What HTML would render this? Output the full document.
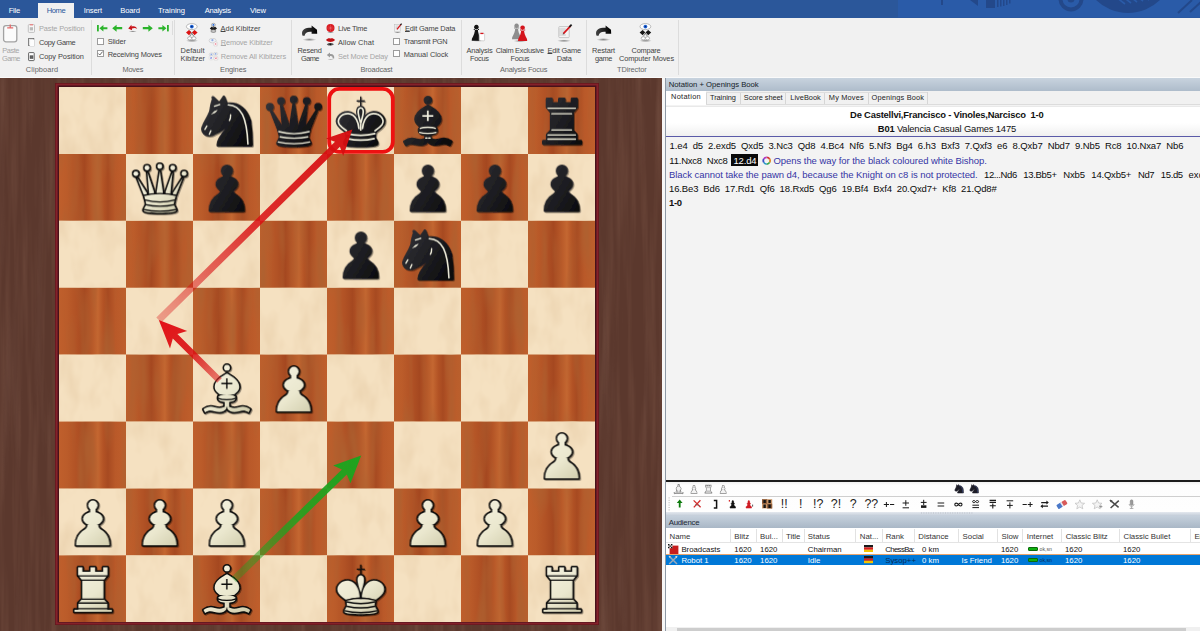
<!DOCTYPE html>
<html><head><meta charset="utf-8"><title>ChessBase</title>
<style>
*{box-sizing:border-box;margin:0;padding:0}
html,body{width:1200px;height:631px;overflow:hidden;background:#5f3d31;font-family:"Liberation Sans",sans-serif;}
body{position:relative}
#boardwrap{position:absolute;left:0;top:77.9px;width:662px;height:553.1px;overflow:hidden;background:#5e3b30;}
#boardwrap svg{position:absolute}
#boardwrap > *{margin-top:-77.9px}
span.t{position:absolute;white-space:nowrap;}
span.t u{text-decoration-thickness:0.5px;text-underline-offset:0.4px}
#frame{position:absolute;left:55.2px;top:83.2px;width:543.4px;height:542.2px;background:#7a1c24;box-shadow:inset 0 0 0 0.8px #65181e, inset 0 0 0 2.6px #84212a, inset 0 0 0 4px #47121a}



</style></head><body>
<svg width="0" height="0" style="position:absolute">
<defs>
<linearGradient id="gw" gradientUnits="userSpaceOnUse" x1="120" y1="100" x2="480" y2="540"><stop offset="0" stop-color="#f6f3e2"/><stop offset="0.55" stop-color="#ebe8cf"/><stop offset="1" stop-color="#cfcbaa"/></linearGradient>
<linearGradient id="gb" gradientUnits="userSpaceOnUse" x1="80" y1="150" x2="540" y2="420"><stop offset="0" stop-color="#313136"/><stop offset="0.6" stop-color="#1b1b1f"/><stop offset="1" stop-color="#0a0a0c"/></linearGradient>

<!-- PAWN -->
<g id="pS"><circle cx="303" cy="151" r="42"/><rect x="279" y="180" width="48" height="45"/><ellipse cx="303" cy="272" rx="89" ry="61"/><path d="M153,509 C153,440 185,395 225,372 C245,360 255,345 255,325 L351,325 C351,345 361,360 381,372 C421,395 452,440 452,509 Z"/></g>

<!-- ROOK -->
<g id="rS"><path d="M171,108 H209 V148 H281 V108 H323 V148 H395 V108 H434 V180 L398,225 V392 L432,428 V488 H472 V507 H138 V488 H173 V428 L208,392 V225 L171,180 Z"/></g>
<g id="rDw"><path d="M171,185 H434 M205,223 H401 M205,393 H401 M173,428 H432 M165,479 H440"/></g>
<g id="rDb"><path d="M178,190 H425 M213,240 H390 M213,385 H390 M178,430 H425 M178,467 H425"/></g>

<!-- KNIGHT -->
<g id="nS"><path d="M178,94 L236,150 L276,90 L300,152 C400,140 470,190 508,300 C522,400 524,470 524,522 L223,522 C222,470 265,420 305,375 L312,335 C280,375 230,400 190,418 C160,440 120,432 100,412 C82,395 82,372 95,345 C115,300 150,250 158,215 C162,180 170,140 182,105 Z"/></g>
<g id="nDb"><path d="M316,160 C430,165 482,270 492,512" stroke-width="14"/><path d="M192,172 L240,157"/><path d="M337,250 C338,272 333,290 326,300"/><path d="M124,350 L106,380 M160,392 L146,424"/><path d="M168,242 Q186,214 218,208 Q206,234 168,242 Z" fill="#f3f1de" stroke-width="3"/></g>

<!-- QUEEN -->
<g id="qS"><circle cx="88" cy="178" r="22"/><circle cx="188" cy="125" r="22"/><circle cx="302" cy="112" r="22"/><circle cx="418" cy="125" r="22"/><circle cx="520" cy="176" r="22"/>
<path d="M99,214 L186,350 L190,400 L172,400 Z"/><path d="M191,165 L250,340 L250,400 L208,400 L206,346 Z"/><path d="M302,152 L330,340 L330,400 L274,400 L274,340 Z"/><path d="M415,165 L398,346 L396,400 L354,400 L354,340 Z"/><path d="M507,214 L434,400 L416,400 L420,350 Z"/>
<path d="M165,374 C240,354 368,354 443,374 C438,410 428,435 428,452 C432,475 452,490 449,508 C440,535 168,535 158,508 C155,490 176,475 180,452 C180,435 170,410 165,374 Z"/></g>
<g id="qDw"><path d="M160,372 C240,350 368,350 448,372 M172,414 C250,434 358,434 436,414 M181,456 C250,474 358,474 427,456 M160,498 C240,520 368,520 447,498"/></g>
<g id="qDb"><path d="M168,400 C250,422 358,422 440,400 M180,447 C250,464 358,464 428,447 M163,493 C240,514 368,514 445,493"/></g>

<!-- KING -->
<g id="kS">
<path d="M292,378 C292,330 268,236 190,228 C118,224 68,292 104,342 C122,368 150,385 172,402 C212,386 260,380 292,378 Z"/>
<path d="M312,378 C312,330 336,236 414,228 C486,224 536,292 500,342 C482,368 454,385 432,402 C392,386 344,380 312,378 Z"/>
<path d="M302,180 C330,180 334,215 329,240 C324,275 310,310 302,338 C294,310 280,275 275,240 C270,215 274,180 302,180 Z"/>
<path d="M172,402 C250,380 354,380 432,402 C430,420 424,440 427,455 C432,475 454,490 449,508 C440,535 164,535 155,508 C150,490 172,475 177,455 C180,440 174,420 172,402 Z"/>
</g>
<g id="kX"><path d="M302,84 V172 M266,125 H338"/></g>
<g id="kDw"><path d="M170,403 C250,381 354,381 434,403 M302,338 V388 M176,418 C250,436 354,436 428,418 M180,458 C250,474 354,474 424,458 M158,498 C240,520 364,520 446,498"/></g>
<g id="kDb">
<path d="M286,372 C284,330 262,244 190,238 C126,236 82,294 112,338 C128,360 150,376 174,392" />
<path d="M318,372 C320,330 342,244 414,238 C478,236 522,294 492,338 C476,360 454,376 430,392"/>
<path d="M302,186 C324,186 328,215 323,240 C318,272 308,300 302,326 C296,300 286,272 281,240 C276,215 280,186 302,186 Z"/>
<path d="M176,418 C250,436 354,436 428,418 M182,462 C250,478 354,478 422,462 M302,330 V385"/>
</g>

<!-- BISHOP -->
<g id="bS"><circle cx="304" cy="118" r="26"/>
<path d="M304,170 C335,188 414,226 414,288 C414,326 384,340 368,356 L240,356 C224,340 194,326 194,288 C194,226 273,188 304,170 Z"/>
<ellipse cx="303" cy="382" rx="78" ry="25"/>
<path d="M225,394 C225,436 381,436 381,394 Z"/>
<rect x="284" y="420" width="40" height="50"/>
<path d="M296,460 C270,480 235,484 195,472 C160,461 125,466 94,490 L108,518 C135,500 160,498 192,508 C240,522 285,514 300,482 Z"/>
<path d="M310,460 C336,480 371,484 411,472 C446,461 481,466 512,490 L498,518 C471,500 446,498 414,508 C366,522 321,514 306,482 Z"/>
</g>
<g id="bX"><path d="M303,212 V306 M254,260 H352"/></g>
<g id="bDw"><path d="M228,392 C260,408 346,408 378,392"/></g>
<g id="bDb"><path d="M236,372 C260,358 346,358 370,372 M230,408 C262,420 344,420 376,408"/><path d="M285,458 H296 M312,458 H323" stroke-width="14"/></g>
</defs>
</svg>

<div style="position:absolute;left:0px;top:0px;width:1200px;height:17.5px;background:#2b579a"></div>
<svg style="position:absolute;left:898px;top:0" width="302" height="17.5" viewBox="898 0 302 17.5"><rect x="898" y="0" width="302" height="17.5" fill="#2a5ba8"/>
<g fill="#23488a"><rect x="941" y="0" width="2" height="5"/><path d="M970,0 L978,0 L978,6 Z"/><rect x="986" y="0" width="9" height="8"/><path d="M997,0h1.5v7h-1.5zM1000,0h1.5v6.5h-1.5zM1003,0h1.5v6h-1.5zM1006,0h1.5v5h-1.5zM1009,0h1.5v3.5h-1.5z"/>
<circle cx="1128" cy="-32.9" r="45.9"/></g>
<circle cx="1071" cy="-1" r="10.5" fill="none" stroke="#23488a" stroke-width="4"/><circle cx="1071" cy="-1" r="3.5" fill="#23488a"/>
<g stroke="#2a5ba8" stroke-width="1.6"><path d="M1116,-3 l9,7 M1122,-4 l9,7 M1128,-5 l9,7 M1134,-6 l9,7 M1140,-7 l9,7"/></g>
<g stroke="#23488a" stroke-width="2"><path d="M1178,13 L1192,0 M1190,12 L1202,1"/></g></svg>
<div style="position:absolute;left:37.5px;top:2.5px;width:36.3px;height:15.5px;background:#f1f1f1"></div>
<span class="t" id="t1" style="font-size:7.6px;color:#fff;top:5.84px;line-height:9.12px;left:8.70px;letter-spacing:-0.237px;">File</span>
<span class="t" id="t2" style="font-size:7.6px;color:#2b579a;top:5.84px;line-height:9.12px;left:46.70px;letter-spacing:-0.416px;">Home</span>
<span class="t" id="t3" style="font-size:7.6px;color:#fff;top:5.84px;line-height:9.12px;left:83.70px;letter-spacing:-0.117px;">Insert</span>
<span class="t" id="t4" style="font-size:7.6px;color:#fff;top:5.84px;line-height:9.12px;left:120.30px;letter-spacing:-0.173px;">Board</span>
<span class="t" id="t5" style="font-size:7.6px;color:#fff;top:5.84px;line-height:9.12px;left:158.00px;letter-spacing:-0.020px;">Training</span>
<span class="t" id="t6" style="font-size:7.6px;color:#fff;top:5.84px;line-height:9.12px;left:204.70px;letter-spacing:-0.273px;">Analysis</span>
<span class="t" id="t7" style="font-size:7.6px;color:#fff;top:5.84px;line-height:9.12px;left:250.00px;letter-spacing:-0.132px;">View</span>
<div style="position:absolute;left:0px;top:17.5px;width:1200px;height:59.5px;background:#f1f1f1"></div>
<div style="position:absolute;left:0px;top:76.6px;width:1200px;height:1.4px;background:#fafafa"></div>
<div style="position:absolute;left:90.5px;top:20px;width:1px;height:55px;background:#dcdcdc"></div>
<div style="position:absolute;left:174.3px;top:20px;width:1px;height:55px;background:#dcdcdc"></div>
<div style="position:absolute;left:291.2px;top:20px;width:1px;height:55px;background:#dcdcdc"></div>
<div style="position:absolute;left:461.2px;top:20px;width:1px;height:55px;background:#dcdcdc"></div>
<div style="position:absolute;left:585.5px;top:20px;width:1px;height:55px;background:#dcdcdc"></div>
<div style="position:absolute;left:678.4px;top:20px;width:1px;height:55px;background:#dcdcdc"></div>
<div style="position:absolute;left:172px;top:21.3px;width:1px;height:13.400000000000002px;background:#dcdcdc"></div>
<span class="t" id="t8" style="font-size:7.4px;color:#a6a6a6;top:46.96px;line-height:8.88px;left:2.15px;letter-spacing:-0.401px;">Paste</span>
<span class="t" id="t9" style="font-size:7.4px;color:#a6a6a6;top:55.46px;line-height:8.88px;left:2.10px;letter-spacing:-0.635px;">Game</span>
<span class="t" id="t10" style="font-size:7.4px;color:#a6a6a6;top:24.76px;line-height:8.88px;left:39.00px;letter-spacing:-0.118px;">Paste Position</span>
<span class="t" id="t11" style="font-size:7.4px;color:#444;top:38.96px;line-height:8.88px;left:39.00px;letter-spacing:-0.338px;">Copy Game</span>
<span class="t" id="t12" style="font-size:7.4px;color:#444;top:53.26px;line-height:8.88px;left:39.00px;letter-spacing:-0.062px;">Copy Position</span>
<span class="t" id="t13" style="font-size:7.4px;color:#666;top:66.46px;line-height:8.88px;left:25.75px;letter-spacing:0.095px;">Clipboard</span>
<span class="t" id="t14" style="font-size:7.4px;color:#444;top:38.26px;line-height:8.88px;left:107.70px;letter-spacing:-0.134px;">Slider</span>
<span class="t" id="t15" style="font-size:7.4px;color:#444;top:50.66px;line-height:8.88px;left:107.70px;letter-spacing:-0.152px;">Receiving Moves</span>
<span class="t" id="t16" style="font-size:7.4px;color:#666;top:66.46px;line-height:8.88px;left:122.50px;letter-spacing:-0.196px;">Moves</span>
<span class="t" id="t17" style="font-size:7.4px;color:#444;top:46.96px;line-height:8.88px;left:180.60px;letter-spacing:0.083px;">Default</span>
<span class="t" id="t18" style="font-size:7.4px;color:#444;top:55.46px;line-height:8.88px;left:180.55px;letter-spacing:-0.020px;">Kibitzer</span>
<span class="t" id="t19" style="font-size:7.4px;color:#444;top:24.76px;line-height:8.88px;left:220.60px;letter-spacing:0.012px;"><u>A</u>dd Kibitzer</span>
<span class="t" id="t20" style="font-size:7.4px;color:#a6a6a6;top:38.96px;line-height:8.88px;left:220.80px;letter-spacing:-0.169px;"><u>R</u>emove Kibitzer</span>
<span class="t" id="t21" style="font-size:7.4px;color:#a6a6a6;top:53.26px;line-height:8.88px;left:220.80px;letter-spacing:-0.129px;">Remove All Kibitzers</span>
<span class="t" id="t22" style="font-size:7.4px;color:#666;top:66.46px;line-height:8.88px;left:220.05px;letter-spacing:-0.060px;">Engines</span>
<span class="t" id="t23" style="font-size:7.4px;color:#444;top:46.96px;line-height:8.88px;left:297.50px;letter-spacing:-0.247px;">Resend</span>
<span class="t" id="t24" style="font-size:7.4px;color:#444;top:55.46px;line-height:8.88px;left:301.00px;letter-spacing:-0.585px;">Game</span>
<span class="t" id="t25" style="font-size:7.4px;color:#444;top:24.76px;line-height:8.88px;left:338.00px;letter-spacing:-0.293px;">Live Time</span>
<span class="t" id="t26" style="font-size:7.4px;color:#444;top:38.96px;line-height:8.88px;left:338.00px;letter-spacing:0.067px;">Allow Chat</span>
<span class="t" id="t27" style="font-size:7.4px;color:#a6a6a6;top:53.26px;line-height:8.88px;left:338.00px;letter-spacing:-0.169px;">Set Move Delay</span>
<span class="t" id="t28" style="font-size:7.4px;color:#444;top:24.76px;line-height:8.88px;left:405.00px;letter-spacing:-0.164px;"><u>E</u>dit Game Data</span>
<span class="t" id="t29" style="font-size:7.4px;color:#444;top:38.26px;line-height:8.88px;left:403.70px;letter-spacing:-0.229px;">Transmit PGN</span>
<span class="t" id="t30" style="font-size:7.4px;color:#444;top:50.66px;line-height:8.88px;left:403.70px;letter-spacing:-0.015px;">Manual Clock</span>
<span class="t" id="t31" style="font-size:7.4px;color:#666;top:66.46px;line-height:8.88px;left:360.50px;letter-spacing:-0.142px;">Broadcast</span>
<span class="t" id="t32" style="font-size:7.4px;color:#444;top:46.96px;line-height:8.88px;left:466.50px;letter-spacing:-0.191px;">Analysis</span>
<span class="t" id="t33" style="font-size:7.4px;color:#444;top:55.46px;line-height:8.88px;left:470.00px;letter-spacing:-0.308px;">Focus</span>
<span class="t" id="t34" style="font-size:7.4px;color:#444;top:46.96px;line-height:8.88px;left:495.80px;letter-spacing:-0.278px;">Claim Exclusive</span>
<span class="t" id="t35" style="font-size:7.4px;color:#444;top:55.46px;line-height:8.88px;left:510.50px;letter-spacing:-0.308px;">Focus</span>
<span class="t" id="t36" style="font-size:7.4px;color:#444;top:46.96px;line-height:8.88px;left:547.55px;letter-spacing:-0.182px;"><u>E</u>dit Game</span>
<span class="t" id="t37" style="font-size:7.4px;color:#444;top:55.46px;line-height:8.88px;left:556.80px;letter-spacing:-0.206px;">Data</span>
<span class="t" id="t38" style="font-size:7.4px;color:#666;top:66.46px;line-height:8.88px;left:500.00px;letter-spacing:-0.179px;">Analysis Focus</span>
<span class="t" id="t39" style="font-size:7.4px;color:#444;top:46.96px;line-height:8.88px;left:592.00px;letter-spacing:-0.118px;">Restart</span>
<span class="t" id="t40" style="font-size:7.4px;color:#444;top:55.46px;line-height:8.88px;left:595.00px;letter-spacing:-0.375px;">game</span>
<span class="t" id="t41" style="font-size:7.4px;color:#444;top:46.96px;line-height:8.88px;left:631.50px;letter-spacing:-0.201px;">Compare</span>
<span class="t" id="t42" style="font-size:7.4px;color:#444;top:55.46px;line-height:8.88px;left:619.00px;letter-spacing:-0.092px;">Computer Moves</span>
<span class="t" id="t43" style="font-size:7.4px;color:#666;top:66.46px;line-height:8.88px;left:616.95px;letter-spacing:-0.077px;">TDirector</span>
<div style="position:absolute;left:97.3px;top:38px;width:6.8px;height:6.8px;background:#fff;border:0.7px solid #9c9c9c"></div>
<div style="position:absolute;left:97.3px;top:50.3px;width:6.8px;height:6.8px;background:#fff;border:0.7px solid #9c9c9c"></div>
<div style="position:absolute;left:393.2px;top:38px;width:6.8px;height:6.8px;background:#fff;border:0.7px solid #9c9c9c"></div>
<div style="position:absolute;left:393.2px;top:50.3px;width:6.8px;height:6.8px;background:#fff;border:0.7px solid #9c9c9c"></div>
<svg style="position:absolute;left:97.3px;top:50.3px" width="6.8" height="6.8" viewBox="0 0 6.8 6.8"><path d="M1.3,3.5 L2.8,5 L5.6,1.6" fill="none" stroke="#555" stroke-width="0.9"/></svg>
<svg style="position:absolute;left:0;top:0" width="700" height="77" viewBox="0 0 700 77">
<defs>
<radialGradient id="shd"><stop offset="0" stop-color="#000" stop-opacity="0.45"/><stop offset="1" stop-color="#000" stop-opacity="0"/></radialGradient>
<linearGradient id="gpn" x1="0" y1="0" x2="1" y2="0"><stop offset="0" stop-color="#444"/><stop offset="1" stop-color="#000"/></linearGradient>
<path id="curv" d="M1.2,9.6 C-0.6,5.4 2.2,1.6 7.4,1.6 L10.2,1.6 L10.2,-0.6 L15.6,3.6 L15.8,7.6 L10.2,7.6 L10.2,5.6 C6.6,5.2 3.6,6 3.2,9.6 Z"/>
<g id="eyeic"><ellipse cx="0" cy="0" rx="5.4" ry="3" fill="#fff" stroke="#8f8f8f" stroke-width="0.6"/><circle cx="0" cy="0" r="1.9" fill="#1b62d8"/><circle cx="0" cy="0" r="0.8" fill="#0a2a70"/></g>
<path id="pawnic" d="M0,-8 a2.3,2.3 0 1 1 -0.01,0 M-1.5,-3.8 C-1.2,-1 -2.6,2.6 -4.4,5.6 L-4.6,7.6 L4.6,7.6 L4.4,5.6 C2.6,2.6 1.2,-1 1.5,-3.8 Z M-2.6,-4 H2.6 V-3 H-2.6Z"/>
</defs>
<!-- Paste Game -->
<rect x="3.6" y="25.6" width="13.2" height="16.2" rx="2.4" fill="#fbfbfb" stroke="#a2a2a2" stroke-width="1.3"/>
<path d="M7.2,27.2 H13.2 V28.5 H7.2 Z M9.6,24.6 H10.9 V27.4 H9.6 Z" fill="#e46a6a"/>
<!-- Paste Position -->
<rect x="28.3" y="24.6" width="6.2" height="7.8" rx="0.8" fill="#f6f6f6" stroke="#b4b4b4" stroke-width="0.8"/>
<path d="M29.8,24 H33 V25.4 H29.8Z" fill="#e58a8a"/><rect x="29.8" y="27.2" width="3.2" height="3.2" fill="#b9b9b9"/>
<!-- Copy Game -->
<rect x="28.6" y="38.4" width="5.2" height="7.2" fill="#fff" stroke="#666" stroke-width="0.8"/><rect x="29.8" y="39.6" width="4.8" height="7" fill="#fdfdfd" stroke="#c8c8c8" stroke-width="0.5"/>
<!-- Copy Position -->
<rect x="28.6" y="52.6" width="5.6" height="8" rx="0.6" fill="#fff" stroke="#555" stroke-width="0.9"/><rect x="29.8" y="55.4" width="3.4" height="3.4" fill="#333"/><path d="M30.9,55.4v3.4M32.1,55.4v3.4" stroke="#ddd" stroke-width="0.4"/>
<!-- move arrows -->
<g fill="#2bb42b" stroke="none">
<rect x="97" y="25" width="1.8" height="6.4"/><path d="M99.4,28.2 L103.4,24.9 L103.4,27.2 L107.4,27.2 L107.4,29.2 L103.4,29.2 L103.4,31.5 Z"/>
<path d="M112.2,28.2 L116.6,24.7 L116.6,27.1 L122.2,27.1 L122.2,29.3 L116.6,29.3 L116.6,31.7 Z"/>
<path d="M152.8,28.2 L148.4,24.7 L148.4,27.1 L142.8,27.1 L142.8,29.3 L148.4,29.3 L148.4,31.7 Z"/>
<rect x="167" y="25" width="1.8" height="6.4"/><path d="M166.4,28.2 L162.4,24.9 L162.4,27.2 L158.4,27.2 L158.4,29.2 L162.4,29.2 L162.4,31.5 Z"/>
</g>
<ellipse cx="132.8" cy="31.4" rx="4" ry="1" fill="url(#shd)"/>
<path d="M128.2,28.6 L131.4,24.8 L131.6,26.4 C134.4,25.6 136.6,26.6 137.2,29 C135.8,27.8 134,27.8 131.9,28.6 L132.1,30.2 Z" fill="#c8141a"/>
<!-- Default Kibitzer -->
<ellipse cx="192" cy="40.8" rx="6.4" ry="1.3" fill="url(#shd)"/>
<use href="#eyeic" x="191.8" y="26.6"/>
<path d="M189.6,30.6 L194,36.4 M194,30.6 L189.6,36.4" stroke="#555" stroke-width="0.7"/>
<path d="M186,32.6 L189,30 L191.5,32.6 L189,35.2 Z M192.1,32.6 L194.6,30 L197.6,32.6 L194.6,35.2 Z" fill="#dc1212"/>
<ellipse cx="189.7" cy="38.3" rx="2.1" ry="1.6" fill="#fff" stroke="#8a8a8a" stroke-width="0.6"/><ellipse cx="193.9" cy="38.3" rx="2.1" ry="1.6" fill="#fff" stroke="#8a8a8a" stroke-width="0.6"/>
<!-- Add Kibitzer -->
<ellipse cx="213.4" cy="32" rx="3.8" ry="0.9" fill="url(#shd)"/>
<ellipse cx="213.4" cy="24.8" rx="2" ry="1.5" fill="#dfe8f6" stroke="#777" stroke-width="0.5"/><circle cx="213.4" cy="24.8" r="0.9" fill="#1b62d8"/>
<path d="M213.4,26.2 V31" stroke="#333" stroke-width="0.8"/>
<path d="M209.8,28.4 L211.8,26.6 L213.4,28 L215,26.6 L217,28.4 L214.8,30.2 L213.4,29.2 L212,30.2 Z" fill="#1a1a1a"/>
<ellipse cx="213.4" cy="31" rx="2.6" ry="1.1" fill="#e8e8e8" stroke="#555" stroke-width="0.6"/>
<!-- Remove Kibitzer -->
<g opacity="0.8"><ellipse cx="212.6" cy="40.6" rx="3.6" ry="2.3" fill="#eef2f8" stroke="#b5b5b5" stroke-width="0.6"/><circle cx="212.4" cy="40.2" r="1.1" fill="#7a9ae0"/><rect x="213.6" y="42" width="4" height="4" rx="0.7" fill="#fff" stroke="#c4c4c4" stroke-width="0.5"/><path d="M214.7,43.1 l1.8,1.8 m0,-1.8 l-1.8,1.8" stroke="#e8506a" stroke-width="0.8"/></g>
<g opacity="0.8"><ellipse cx="211.4" cy="54.4" rx="2.2" ry="1.5" fill="#eef2f8" stroke="#bbb" stroke-width="0.5"/><ellipse cx="215.6" cy="53.8" rx="2.2" ry="1.5" fill="#eef2f8" stroke="#bbb" stroke-width="0.5"/><circle cx="211.4" cy="54.4" r="0.9" fill="#7a9ae0"/><circle cx="215.6" cy="53.8" r="0.9" fill="#7a9ae0"/><rect x="209.2" y="56" width="3.8" height="3.8" rx="0.6" fill="#fff" stroke="#c4c4c4" stroke-width="0.5"/><path d="M210.2,57 l1.8,1.8 m0,-1.8 l-1.8,1.8" stroke="#6a7ae0" stroke-width="0.8"/><rect x="214" y="56.4" width="3.8" height="3.8" rx="0.6" fill="#fff" stroke="#c4c4c4" stroke-width="0.5"/><path d="M215,57.4 l1.8,1.8 m0,-1.8 l-1.8,1.8" stroke="#e8506a" stroke-width="0.8"/></g>
<!-- Resend Game -->
<ellipse cx="309.4" cy="39.6" rx="7" ry="1.6" fill="url(#shd)"/>
<use href="#curv" x="301.4" y="26.2" fill="url(#gpn)"/>
<!-- Live time -->
<ellipse cx="330.6" cy="32.4" rx="3.6" ry="0.8" fill="url(#shd)"/>
<circle cx="330.5" cy="28" r="4" fill="#d8161c"/><path d="M330.5,24.6 V31.4 M327.1,28 H333.9 M328.1,25.6 L332.9,30.4 M332.9,25.6 L328.1,30.4" stroke="#f08a8a" stroke-width="0.35"/>
<!-- Allow chat -->
<path d="M326,40 C327.6,38 329.2,37.8 330.4,38.6 C331.6,37.8 333.4,38 335,40 C333,42.6 328,42.6 326,40 Z" fill="#cc1418"/><path d="M326.6,40 H334.4" stroke="#7a0a0c" stroke-width="0.4"/>
<path d="M326.8,44.4 C328.6,42.6 332,42.6 334,44.2 C332,46 328.6,46 326.8,44.4 Z" fill="#555"/><circle cx="330.4" cy="44.3" r="0.9" fill="#111"/>
<!-- Set move delay -->
<path d="M326.8,55 L330,52.6 L330,54 C333,53.6 334.6,55.4 334.2,58.4 L332.6,58.4 C332.8,56.6 332,55.8 330,56 L330,57.4 Z" fill="#9a9a9a"/>
<ellipse cx="330.6" cy="59.4" rx="3.4" ry="0.7" fill="url(#shd)" opacity="0.6"/>
<!-- Edit game data small -->
<ellipse cx="397.6" cy="32.4" rx="3.6" ry="0.8" fill="url(#shd)"/>
<rect x="394.6" y="24.4" width="5.6" height="6.8" fill="#f4f4f4" stroke="#b8b8b8" stroke-width="0.5"/><path d="M395.6,26 h3 M395.6,27.4 h3 M395.6,28.8 h2.4" stroke="#999" stroke-width="0.4"/><path d="M397,29.4 L401,24.4" stroke="#d8161c" stroke-width="1.3"/><path d="M400.4,25.2 L401.6,23.6" stroke="#222" stroke-width="1.3"/>
<!-- Analysis Focus -->
<ellipse cx="477.4" cy="40.6" rx="6" ry="1.2" fill="url(#shd)"/>
<use href="#pawnic" x="476.4" y="33" fill="#141414" transform="translate(476.4,33) scale(1.02) translate(-476.4,-33)"/>
<rect x="479.2" y="33.4" width="5.4" height="7.4" rx="0.8" fill="#fff" stroke="#bdbdbd" stroke-width="0.6"/><rect x="480.4" y="32.8" width="3" height="1.3" fill="#d8161c"/>
<!-- Claim Exclusive Focus -->
<ellipse cx="520" cy="41" rx="7" ry="1.2" fill="url(#shd)"/>
<use href="#pawnic" x="516.6" y="31.6" fill="#8e8e8e"/>
<use href="#pawnic" x="522.6" y="33.4" fill="#d4141c"/>
<!-- Edit Game Data big -->
<ellipse cx="564" cy="40.8" rx="7" ry="1.4" fill="url(#shd)"/>
<rect x="558.8" y="26.6" width="10.4" height="11" rx="0.8" fill="#f4f4f4" stroke="#b4b4b4" stroke-width="0.7"/>
<path d="M560.4,29 h5.4 M560.4,31 h5 M560.4,33 h4 M560.4,35 h5.4" stroke="#9a9a9a" stroke-width="0.5"/><path d="M559.6,29h0.6M559.6,31h0.6M559.6,33h0.6M559.6,35h0.6" stroke="#777" stroke-width="0.6"/>
<path d="M563.4,33.6 L570.6,25.8" stroke="#d8161c" stroke-width="1.7"/><path d="M569.4,27 L571.6,24.6" stroke="#1a1a1a" stroke-width="1.8"/><path d="M562.6,34.6 L563.2,33 L564.2,34 Z" fill="#444"/>
<!-- Restart game -->
<ellipse cx="603.4" cy="39.6" rx="7" ry="1.6" fill="url(#shd)"/>
<use href="#curv" x="595.4" y="26.2" fill="url(#gpn)"/>
<!-- Compare computer moves -->
<ellipse cx="645.6" cy="40.8" rx="6.4" ry="1.3" fill="url(#shd)"/>
<use href="#eyeic" x="645.4" y="26.6"/>
<path d="M643.2,30.6 L647.6,36.4 M647.6,30.6 L643.2,36.4" stroke="#555" stroke-width="0.7"/>
<path d="M639.6,32.6 L642.6,30 L645.1,32.6 L642.6,35.2 Z M645.7,32.6 L648.2,30 L651.2,32.6 L648.2,35.2 Z" fill="#161616"/>
<ellipse cx="643.3" cy="38.3" rx="2.1" ry="1.6" fill="#fff" stroke="#8a8a8a" stroke-width="0.6"/><ellipse cx="647.5" cy="38.3" rx="2.1" ry="1.6" fill="#fff" stroke="#8a8a8a" stroke-width="0.6"/>
</svg>

<div id="boardwrap">
<svg width="662" height="554" style="position:absolute;left:0;top:0;margin:0"><defs>
<filter id="gbg" x="0" y="0" width="100%" height="100%"><feTurbulence type="fractalNoise" baseFrequency="0.14 0.006" numOctaves="3" seed="7"/><feColorMatrix type="matrix" values="0 0 0 0 0.25  0 0 0 0 0.12  0 0 0 0 0.08  0.7 0 0 0 -0.3"/></filter>
<filter id="gbg2" x="0" y="0" width="100%" height="100%"><feTurbulence type="fractalNoise" baseFrequency="0.09 0.005" numOctaves="2" seed="11"/><feColorMatrix type="matrix" values="0 0 0 0 0.50  0 0 0 0 0.32  0 0 0 0 0.26  0.32 0 0 0 -0.19"/></filter>
</defs><rect width="662" height="554" fill="#5b382d"/><rect width="662" height="554" filter="url(#gbg)"/><rect width="662" height="554" filter="url(#gbg2)"/></svg>
<div id="frame"></div>
<svg id="wood" width="536" height="535.20" style="position:absolute;left:59px;top:86.8px">
<defs>
<linearGradient id="dk" x1="0" y1="0" x2="1" y2="0"><stop offset="0" stop-color="#bf5f2c"/><stop offset="0.12" stop-color="#bb5c2a"/><stop offset="0.26" stop-color="#b15225"/><stop offset="0.38" stop-color="#a54820"/><stop offset="0.48" stop-color="#b55627"/><stop offset="0.58" stop-color="#c46731"/><stop offset="0.66" stop-color="#b35325"/><stop offset="0.73" stop-color="#a74a21"/><stop offset="0.84" stop-color="#b95929"/><stop offset="1" stop-color="#bf5f2c"/></linearGradient>
<filter id="gd" x="0" y="0" width="100%" height="100%"><feTurbulence type="fractalNoise" baseFrequency="0.09 0.012" numOctaves="2" seed="4"/><feColorMatrix type="matrix" values="0 0 0 0 0.42  0 0 0 0 0.12  0 0 0 0 0.03  2.0 0 0 0 -0.8"/></filter>
<filter id="gl" x="0" y="0" width="100%" height="100%"><feTurbulence type="fractalNoise" baseFrequency="0.05 0.025" numOctaves="3" seed="2"/><feColorMatrix type="matrix" values="0 0 0 0 0.84  0 0 0 0 0.66  0 0 0 0 0.44  2.0 0 0 0 -0.84"/></filter>
<clipPath id="lc"><path d="M0.00,0.00h67v66.90h-67zM134.00,0.00h67v66.90h-67zM268.00,0.00h67v66.90h-67zM402.00,0.00h67v66.90h-67zM67.00,66.90h67v66.90h-67zM201.00,66.90h67v66.90h-67zM335.00,66.90h67v66.90h-67zM469.00,66.90h67v66.90h-67zM0.00,133.80h67v66.90h-67zM134.00,133.80h67v66.90h-67zM268.00,133.80h67v66.90h-67zM402.00,133.80h67v66.90h-67zM67.00,200.70h67v66.90h-67zM201.00,200.70h67v66.90h-67zM335.00,200.70h67v66.90h-67zM469.00,200.70h67v66.90h-67zM0.00,267.60h67v66.90h-67zM134.00,267.60h67v66.90h-67zM268.00,267.60h67v66.90h-67zM402.00,267.60h67v66.90h-67zM67.00,334.50h67v66.90h-67zM201.00,334.50h67v66.90h-67zM335.00,334.50h67v66.90h-67zM469.00,334.50h67v66.90h-67zM0.00,401.40h67v66.90h-67zM134.00,401.40h67v66.90h-67zM268.00,401.40h67v66.90h-67zM402.00,401.40h67v66.90h-67zM67.00,468.30h67v66.90h-67zM201.00,468.30h67v66.90h-67zM335.00,468.30h67v66.90h-67zM469.00,468.30h67v66.90h-67z"/></clipPath>
</defs>
<rect width="536" height="535.20" fill="#bc5e2a"/>
<rect x="67" y="0.00" width="67" height="66.9" fill="url(#dk)"/><rect x="201" y="0.00" width="67" height="66.9" fill="url(#dk)"/><rect x="335" y="0.00" width="67" height="66.9" fill="url(#dk)"/><rect x="469" y="0.00" width="67" height="66.9" fill="url(#dk)"/><rect x="0" y="66.90" width="67" height="66.9" fill="url(#dk)"/><rect x="134" y="66.90" width="67" height="66.9" fill="url(#dk)"/><rect x="268" y="66.90" width="67" height="66.9" fill="url(#dk)"/><rect x="402" y="66.90" width="67" height="66.9" fill="url(#dk)"/><rect x="67" y="133.80" width="67" height="66.9" fill="url(#dk)"/><rect x="201" y="133.80" width="67" height="66.9" fill="url(#dk)"/><rect x="335" y="133.80" width="67" height="66.9" fill="url(#dk)"/><rect x="469" y="133.80" width="67" height="66.9" fill="url(#dk)"/><rect x="0" y="200.70" width="67" height="66.9" fill="url(#dk)"/><rect x="134" y="200.70" width="67" height="66.9" fill="url(#dk)"/><rect x="268" y="200.70" width="67" height="66.9" fill="url(#dk)"/><rect x="402" y="200.70" width="67" height="66.9" fill="url(#dk)"/><rect x="67" y="267.60" width="67" height="66.9" fill="url(#dk)"/><rect x="201" y="267.60" width="67" height="66.9" fill="url(#dk)"/><rect x="335" y="267.60" width="67" height="66.9" fill="url(#dk)"/><rect x="469" y="267.60" width="67" height="66.9" fill="url(#dk)"/><rect x="0" y="334.50" width="67" height="66.9" fill="url(#dk)"/><rect x="134" y="334.50" width="67" height="66.9" fill="url(#dk)"/><rect x="268" y="334.50" width="67" height="66.9" fill="url(#dk)"/><rect x="402" y="334.50" width="67" height="66.9" fill="url(#dk)"/><rect x="67" y="401.40" width="67" height="66.9" fill="url(#dk)"/><rect x="201" y="401.40" width="67" height="66.9" fill="url(#dk)"/><rect x="335" y="401.40" width="67" height="66.9" fill="url(#dk)"/><rect x="469" y="401.40" width="67" height="66.9" fill="url(#dk)"/><rect x="0" y="468.30" width="67" height="66.9" fill="url(#dk)"/><rect x="134" y="468.30" width="67" height="66.9" fill="url(#dk)"/><rect x="268" y="468.30" width="67" height="66.9" fill="url(#dk)"/><rect x="402" y="468.30" width="67" height="66.9" fill="url(#dk)"/>
<rect width="536" height="535.20" filter="url(#gd)"/>
<g clip-path="url(#lc)"><rect width="536" height="535.20" fill="#f5e1c1"/><rect width="536" height="535.20" filter="url(#gl)"/></g>
</svg>

<svg id="board" viewBox="0 0 4800 4800" preserveAspectRatio="none" style="position:absolute;left:59px;top:86.8px;width:536px;height:535.2px">
<defs><filter id="psh" x="-2%" y="-2%" width="104%" height="104%"><feGaussianBlur in="SourceAlpha" stdDeviation="5"/><feOffset dx="7" dy="6"/><feComponentTransfer><feFuncA type="linear" slope="0.4"/></feComponentTransfer><feMerge><feMergeNode/><feMergeNode in="SourceGraphic"/></feMerge></filter></defs>
<g filter="url(#psh)"><g transform="translate(1200,0)"><use href="#nS" fill="url(#gb)" stroke="url(#gb)" stroke-width="26" stroke-linejoin="round"/><use href="#nDb" fill="none" stroke="#f3f1de" stroke-width="12" stroke-linecap="round"/></g><g transform="translate(1800,0)"><use href="#qS" fill="url(#gb)" stroke="url(#gb)" stroke-width="26" stroke-linejoin="round"/><use href="#qDb" fill="none" stroke="#f3f1de" stroke-width="12" stroke-linecap="round"/></g><g transform="translate(2400,0)"><use href="#kS" fill="url(#gb)" stroke="url(#gb)" stroke-width="26" stroke-linejoin="round"/><use href="#kDb" fill="none" stroke="#f3f1de" stroke-width="15" stroke-linecap="round"/><use href="#kX" fill="none" stroke="#1a1a1f" stroke-width="12"/></g><g transform="translate(3000,0)"><use href="#bS" fill="url(#gb)" stroke="url(#gb)" stroke-width="26" stroke-linejoin="round"/><use href="#bDb" fill="none" stroke="#f3f1de" stroke-width="12" stroke-linecap="round"/><use href="#bX" fill="none" stroke="#f2f0e0" stroke-width="16"/></g><g transform="translate(4200,0)"><use href="#rS" fill="url(#gb)" stroke="url(#gb)" stroke-width="26" stroke-linejoin="round"/><use href="#rDb" fill="none" stroke="#f3f1de" stroke-width="12" stroke-linecap="round"/></g><g transform="translate(600,600)"><use href="#qS" fill="#0a0a0a" stroke="#0a0a0a" stroke-width="28" stroke-linejoin="round"/><use href="#qS" fill="url(#gw)"/><use href="#qDw" fill="none" stroke="#0a0a0a" stroke-width="12.5" stroke-linecap="round"/></g><g transform="translate(1200,600)"><use href="#pS" fill="url(#gb)" stroke="url(#gb)" stroke-width="26" stroke-linejoin="round"/></g><g transform="translate(3000,600)"><use href="#pS" fill="url(#gb)" stroke="url(#gb)" stroke-width="26" stroke-linejoin="round"/></g><g transform="translate(3600,600)"><use href="#pS" fill="url(#gb)" stroke="url(#gb)" stroke-width="26" stroke-linejoin="round"/></g><g transform="translate(4200,600)"><use href="#pS" fill="url(#gb)" stroke="url(#gb)" stroke-width="26" stroke-linejoin="round"/></g><g transform="translate(2400,1200)"><use href="#pS" fill="url(#gb)" stroke="url(#gb)" stroke-width="26" stroke-linejoin="round"/></g><g transform="translate(3000,1200)"><use href="#nS" fill="url(#gb)" stroke="url(#gb)" stroke-width="26" stroke-linejoin="round"/><use href="#nDb" fill="none" stroke="#f3f1de" stroke-width="12" stroke-linecap="round"/></g><g transform="translate(1200,2400)"><use href="#bS" fill="#0a0a0a" stroke="#0a0a0a" stroke-width="28" stroke-linejoin="round"/><use href="#bS" fill="url(#gw)"/><use href="#bDw" fill="none" stroke="#0a0a0a" stroke-width="12.5" stroke-linecap="round"/><use href="#bX" fill="none" stroke="#0a0a0a" stroke-width="12.5"/></g><g transform="translate(1800,2400)"><use href="#pS" fill="#0a0a0a" stroke="#0a0a0a" stroke-width="28" stroke-linejoin="round"/><use href="#pS" fill="url(#gw)"/></g><g transform="translate(4200,3000)"><use href="#pS" fill="#0a0a0a" stroke="#0a0a0a" stroke-width="28" stroke-linejoin="round"/><use href="#pS" fill="url(#gw)"/></g><g transform="translate(0,3600)"><use href="#pS" fill="#0a0a0a" stroke="#0a0a0a" stroke-width="28" stroke-linejoin="round"/><use href="#pS" fill="url(#gw)"/></g><g transform="translate(600,3600)"><use href="#pS" fill="#0a0a0a" stroke="#0a0a0a" stroke-width="28" stroke-linejoin="round"/><use href="#pS" fill="url(#gw)"/></g><g transform="translate(1200,3600)"><use href="#pS" fill="#0a0a0a" stroke="#0a0a0a" stroke-width="28" stroke-linejoin="round"/><use href="#pS" fill="url(#gw)"/></g><g transform="translate(3000,3600)"><use href="#pS" fill="#0a0a0a" stroke="#0a0a0a" stroke-width="28" stroke-linejoin="round"/><use href="#pS" fill="url(#gw)"/></g><g transform="translate(3600,3600)"><use href="#pS" fill="#0a0a0a" stroke="#0a0a0a" stroke-width="28" stroke-linejoin="round"/><use href="#pS" fill="url(#gw)"/></g><g transform="translate(0,4200)"><use href="#rS" fill="#0a0a0a" stroke="#0a0a0a" stroke-width="28" stroke-linejoin="round"/><use href="#rS" fill="url(#gw)"/><use href="#rDw" fill="none" stroke="#0a0a0a" stroke-width="12.5" stroke-linecap="round"/></g><g transform="translate(1200,4200)"><use href="#bS" fill="#0a0a0a" stroke="#0a0a0a" stroke-width="28" stroke-linejoin="round"/><use href="#bS" fill="url(#gw)"/><use href="#bDw" fill="none" stroke="#0a0a0a" stroke-width="12.5" stroke-linecap="round"/><use href="#bX" fill="none" stroke="#0a0a0a" stroke-width="12.5"/></g><g transform="translate(2400,4200)"><use href="#kS" fill="#0a0a0a" stroke="#0a0a0a" stroke-width="28" stroke-linejoin="round"/><use href="#kS" fill="url(#gw)"/><use href="#kDw" fill="none" stroke="#0a0a0a" stroke-width="12.5" stroke-linecap="round"/><use href="#kX" fill="none" stroke="#0a0a0a" stroke-width="12.5"/></g><g transform="translate(4200,4200)"><use href="#rS" fill="#0a0a0a" stroke="#0a0a0a" stroke-width="28" stroke-linejoin="round"/><use href="#rS" fill="url(#gw)"/><use href="#rDw" fill="none" stroke="#0a0a0a" stroke-width="12.5" stroke-linecap="round"/></g></g>
</svg>
<svg id="arrows" viewBox="0 0 1200 631" style="position:absolute;left:0;top:0;width:1200px;height:631px">
<defs>
<linearGradient id="ar1" gradientUnits="userSpaceOnUse" x1="219.5" y1="380.5" x2="158.8" y2="320"><stop offset="0" stop-color="#d90f12" stop-opacity="0.5"/><stop offset="0.5" stop-color="#d90f12" stop-opacity="0.9"/><stop offset="1" stop-color="#e31217" stop-opacity="1"/></linearGradient>
<linearGradient id="ar2" gradientUnits="userSpaceOnUse" x1="158.8" y1="320" x2="353.3" y2="129.2"><stop offset="0" stop-color="#d90f12" stop-opacity="0.32"/><stop offset="0.5" stop-color="#d90f12" stop-opacity="0.85"/><stop offset="1" stop-color="#d60d10" stop-opacity="0.97"/></linearGradient>
<linearGradient id="ar3" gradientUnits="userSpaceOnUse" x1="233.7" y1="579.7" x2="361.2" y2="456.2"><stop offset="0" stop-color="#1fa31f" stop-opacity="0.3"/><stop offset="0.5" stop-color="#1fa31f" stop-opacity="0.88"/><stop offset="1" stop-color="#1fa31f" stop-opacity="1"/></linearGradient>
</defs>
<rect x="329.2" y="88.9" width="63.6" height="63" rx="10" ry="10" fill="none" stroke="#ee1111" stroke-width="3.8"/>
<polygon points="217.2,382.8 172.8,338.6 170.0,348.4 158.8,320.0 187.2,331.1 177.4,333.9 221.8,378.2" fill="url(#ar1)"/><polygon points="156.3,317.5 335.0,141.8 326.0,138.4 352.4,129.6 343.2,155.9 339.9,146.8 161.3,322.5" fill="url(#ar2)"/><polygon points="231.3,577.2 341.9,469.5 333.2,465.5 361.2,455.6 350.5,483.3 346.8,474.5 236.1,582.2" fill="url(#ar3)"/>
</svg>
</div>
<div style="position:absolute;left:662px;top:77px;width:4px;height:554px;background:#f6f6f6"></div>
<div style="position:absolute;left:665.2px;top:78px;width:0.8px;height:553px;background:#8e99a5"></div>
<div style="position:absolute;left:666px;top:77.9px;width:534px;height:12.8px;background:linear-gradient(#c8d3de,#aebccb)"></div>
<span class="t" id="t44" style="font-size:7.7px;color:#141c28;top:80.38px;line-height:9.24px;left:668.70px;letter-spacing:0.001px;">Notation + Openings Book</span>
<div style="position:absolute;left:666px;top:90.7px;width:534px;height:14px;background:#f1f1f1"></div>
<div style="position:absolute;left:666px;top:104.2px;width:534px;height:0.8px;background:#dcdcdc"></div>
<div style="position:absolute;left:666.3px;top:91px;width:39.6px;height:14.4px;background:#fff"></div>
<div style="position:absolute;left:706.2px;top:92px;width:0.8px;height:12.4px;background:#d6d6d6"></div>
<div style="position:absolute;left:739.5px;top:92px;width:0.8px;height:12.4px;background:#d6d6d6"></div>
<div style="position:absolute;left:785.3px;top:92px;width:0.8px;height:12.4px;background:#d6d6d6"></div>
<div style="position:absolute;left:824.3px;top:92px;width:0.8px;height:12.4px;background:#d6d6d6"></div>
<div style="position:absolute;left:867.5px;top:92px;width:0.8px;height:12.4px;background:#d6d6d6"></div>
<div style="position:absolute;left:926.6px;top:92px;width:0.8px;height:12.4px;background:#d6d6d6"></div>
<div style="position:absolute;left:706.2px;top:92px;width:220.5px;height:0.8px;background:#dedede"></div>
<span class="t" id="t45" style="font-size:7.4px;color:#222;top:93.46px;line-height:8.88px;left:671.00px;letter-spacing:0.309px;">Notation</span>
<span class="t" id="t46" style="font-size:7.4px;color:#222;top:94.46px;line-height:8.88px;left:710.00px;letter-spacing:-0.080px;">Training</span>
<span class="t" id="t47" style="font-size:7.4px;color:#222;top:94.46px;line-height:8.88px;left:743.80px;letter-spacing:-0.068px;">Score sheet</span>
<span class="t" id="t48" style="font-size:7.4px;color:#222;top:94.46px;line-height:8.88px;left:790.30px;letter-spacing:0.012px;">LiveBook</span>
<span class="t" id="t49" style="font-size:7.4px;color:#222;top:94.46px;line-height:8.88px;left:828.80px;letter-spacing:0.177px;">My Moves</span>
<span class="t" id="t50" style="font-size:7.4px;color:#222;top:94.46px;line-height:8.88px;left:871.50px;letter-spacing:0.166px;">Openings Book</span>
<div style="position:absolute;left:666px;top:105px;width:534px;height:2.2px;background:linear-gradient(#f8f8f8,#e4e4e4)"></div>
<div style="position:absolute;left:666px;top:107.2px;width:534px;height:29.1px;background:linear-gradient(#fff 55%,#f0f0f0)"></div>
<div style="position:absolute;left:666px;top:136.2px;width:534px;height:1px;background:#5a5aa8"></div>
<div style="position:absolute;left:666px;top:137.2px;width:534px;height:344px;background:#f3f3f3"></div>
<span class="t" id="t51" style="font-size:9.4px;color:#111;top:108.76px;line-height:11.28px;left:850.10px;font-weight:bold;letter-spacing:-0.199px;">De Castellvi,Francisco - Vinoles,Narcisco  1-0</span>
<span class="t" id="t52" style="font-size:9.4px;color:#111;top:122.56px;line-height:11.28px;left:877.80px;letter-spacing:-0.165px;"><b>B01</b> Valencia Casual Games 1475</span>
<span class="t" id="t53" style="font-size:9.5px;color:#0c0c0c;top:140.38px;line-height:11.40px;left:669.50px;letter-spacing:-0.103px;white-space:pre;">1.e4  d5  2.exd5  Qxd5  3.Nc3  Qd8  4.Bc4  Nf6  5.Nf3  Bg4  6.h3  Bxf3  7.Qxf3  e6  8.Qxb7  Nbd7  9.Nb5  Rc8  10.Nxa7  Nb6</span>
<span class="t" id="t54" style="font-size:9.5px;color:#0c0c0c;top:154.58px;line-height:11.40px;left:669.30px;letter-spacing:-0.214px;white-space:pre;">11.Nxc8  Nxc8</span>
<div style="position:absolute;left:731px;top:153.9px;width:27.4px;height:12.6px;background:#0a0a0a"></div>
<span class="t" id="t55" style="font-size:9.5px;color:#fff;top:154.58px;line-height:11.40px;left:733.40px;letter-spacing:-0.156px;white-space:pre;">12.d4</span>
<svg style="position:absolute;left:761.5px;top:155.6px" width="9.4" height="9.4" viewBox="-5 -5 10 10"><circle r="3.6" fill="none" stroke="#ddd" stroke-width="0.4"/><g stroke-width="1.9" fill="none"><path d="M0,-3.6 A3.6,3.6 0 0 1 3.12,-1.8" stroke="#d63a3a"/><path d="M3.12,-1.8 A3.6,3.6 0 0 1 3.12,1.8" stroke="#e08a2a"/><path d="M3.12,1.8 A3.6,3.6 0 0 1 0,3.6" stroke="#3aa84a"/><path d="M0,3.6 A3.6,3.6 0 0 1 -3.12,1.8" stroke="#2a9ac8"/><path d="M-3.12,1.8 A3.6,3.6 0 0 1 -3.12,-1.8" stroke="#3a50c8"/><path d="M-3.12,-1.8 A3.6,3.6 0 0 1 0,-3.6" stroke="#b03ac0"/></g></svg>
<span class="t" id="t56" style="font-size:9.5px;color:#3535a5;top:154.58px;line-height:11.40px;left:773.50px;letter-spacing:-0.054px;white-space:pre;">Opens the way for the black coloured white Bishop.</span>
<span class="t" id="t57" style="font-size:9.5px;color:#3535a5;top:168.78px;line-height:11.40px;left:669.00px;letter-spacing:-0.047px;white-space:pre;">Black cannot take the pawn d4, because the Knight on c8 is not protected.</span>
<span class="t" id="t58" style="font-size:9.5px;color:#0c0c0c;top:168.78px;line-height:11.40px;left:984.00px;letter-spacing:-0.390px;white-space:pre;">12...Nd6</span>
<span class="t" id="t59" style="font-size:9.5px;color:#0c0c0c;top:168.78px;line-height:11.40px;left:1023.20px;letter-spacing:-0.296px;white-space:pre;">13.Bb5+</span>
<span class="t" id="t60" style="font-size:9.5px;color:#0c0c0c;top:168.78px;line-height:11.40px;left:1063.30px;letter-spacing:-0.172px;white-space:pre;">Nxb5</span>
<span class="t" id="t61" style="font-size:9.5px;color:#0c0c0c;top:168.78px;line-height:11.40px;left:1091.30px;letter-spacing:-0.196px;white-space:pre;">14.Qxb5+</span>
<span class="t" id="t62" style="font-size:9.5px;color:#0c0c0c;top:168.78px;line-height:11.40px;left:1138.00px;letter-spacing:-0.412px;white-space:pre;">Nd7</span>
<span class="t" id="t63" style="font-size:9.5px;color:#0c0c0c;top:168.78px;line-height:11.40px;left:1160.80px;letter-spacing:-0.356px;white-space:pre;">15.d5</span>
<span class="t" id="t64" style="font-size:9.5px;color:#0c0c0c;top:168.78px;line-height:11.40px;left:1188.40px;letter-spacing:0.148px;white-space:pre;">exd5</span>
<span class="t" id="t65" style="font-size:9.5px;color:#0c0c0c;top:182.98px;line-height:11.40px;left:669.00px;letter-spacing:-0.133px;white-space:pre;">16.Be3  Bd6  17.Rd1  Qf6  18.Rxd5  Qg6  19.Bf4  Bxf4  20.Qxd7+  Kf8  21.Qd8#</span>
<span class="t" id="t66" style="font-size:9.5px;color:#111;top:196.78px;line-height:11.40px;left:669.00px;font-weight:bold;letter-spacing:-0.378px;white-space:pre;">1-0</span>
<div style="position:absolute;left:666px;top:480.4px;width:534px;height:2px;background:#1c1c1c"></div>
<div style="position:absolute;left:666px;top:482.4px;width:534px;height:30px;background:linear-gradient(#f0f0f0,#fdfdfd 3px,#fefefe)"></div>
<div style="position:absolute;left:672px;top:496px;width:528px;height:0.8px;background:#cfcfcf"></div>
<div style="position:absolute;left:666px;top:512px;width:534px;height:3.6px;background:linear-gradient(#e4e8ee,#c2ccd8)"></div>
<svg style="position:absolute;left:666px;top:482px" width="534" height="34" viewBox="666 482 534 34">
<!-- gripper -->
<g fill="#b5b5b5"><rect x="668.6" y="497.4" width="1" height="1"/><rect x="668.6" y="499.8" width="1" height="1"/><rect x="668.6" y="502.2" width="1" height="1"/><rect x="668.6" y="504.6" width="1" height="1"/><rect x="668.6" y="507" width="1" height="1"/><rect x="668.6" y="509.4" width="1" height="1"/></g>
<g fill="#b9bec6"><path d="M921,512.4h1v1h-1zM923.4,512.4h1v1h-1zM925.8,512.4h1v1h-1zM928.2,512.4h1v1h-1zM930.6,512.4h1v1h-1zM933,512.4h1v1h-1zM935.4,512.4h1v1h-1zM937.8,512.4h1v1h-1zM940.2,512.4h1v1h-1zM942.6,512.4h1v1h-1zM945,512.4h1v1h-1zM947.4,512.4h1v1h-1zM949.8,512.4h1v1h-1zM952.2,512.4h1v1h-1zM954.6,512.4h1v1h-1zM957,512.4h1v1h-1zM959.4,512.4h1v1h-1zM961.8,512.4h1v1h-1zM964.2,512.4h1v1h-1zM966.6,512.4h1v1h-1zM969,512.4h1v1h-1zM971.4,512.4h1v1h-1z"/></g>
<!-- row1 pieces -->
<g opacity="1">
<g transform="translate(672.4,482.8) scale(0.0205)"><use href="#bS" fill="#7c7c7c" stroke="#7c7c7c" stroke-width="62"/><use href="#bS" fill="#f1f1f1"/></g>
<g transform="translate(688.4,483.6) scale(0.0185)"><use href="#pS" fill="#828282" stroke="#828282" stroke-width="66"/><use href="#pS" fill="#f3f3f3"/></g>
<g transform="translate(702.6,483.4) scale(0.019)"><use href="#rS" fill="#7c7c7c" stroke="#7c7c7c" stroke-width="62"/><use href="#rS" fill="#f4f4f4"/><use href="#rDw" fill="none" stroke="#aaa" stroke-width="30"/></g>
<g transform="translate(717.6,483.6) scale(0.0185)"><use href="#pS" fill="#828282" stroke="#828282" stroke-width="66"/><use href="#pS" fill="#f3f3f3"/></g>
</g>
<g transform="translate(953.2,482.8) scale(0.0195)"><use href="#nS" fill="#1c1c26" stroke="#1c1c26" stroke-width="30"/><path d="M318,160 C430,165 480,270 490,512" fill="none" stroke="#4a5a9a" stroke-width="28"/></g>
<g transform="translate(968.2,482.8) scale(0.0195)"><use href="#nS" fill="#1c1c26" stroke="#1c1c26" stroke-width="30"/><path d="M318,160 C430,165 480,270 490,512" fill="none" stroke="#4a5a9a" stroke-width="28"/></g>
<!-- row2 -->
<path d="M679.7,499.6 L682.6,503 L680.6,503 L680.6,507.6 L678.8,507.6 L678.8,503 L676.8,503 Z" fill="#0c7a0c"/>
<path d="M693.6,500.4 L700.6,507.2 M700.4,500.2 L693.8,507.4" stroke="#d42a2a" stroke-width="1.3"/><path d="M695,504.6 L699.6,505.6" stroke="#666" stroke-width="0.6"/>
<path d="M713.8,500.4 H716.6 V508 H713.8" fill="none" stroke="#111" stroke-width="1.5"/>
<g transform="translate(727.2,498.6) scale(0.0185)"><use href="#pS" fill="#111" stroke="#111" stroke-width="30"/></g><rect x="728.8" y="500" width="1.2" height="1.6" fill="#d42a2a"/>
<g transform="translate(743.2,498.6) scale(0.0185)"><use href="#pS" fill="#cf1a22" stroke="#cf1a22" stroke-width="30"/></g><rect x="752.2" y="504.6" width="0.9" height="2" fill="#444"/>
<rect x="762" y="499.2" width="10.2" height="9.2" fill="#c9976a"/><path d="M762,499.2h5.1v4.6h-5.1zM767.1,503.8h5.1v4.6h-5.1z" fill="#8a5a38"/>
<g fill="#151515"><path d="M763.4,500h2.4v3h-2.4zM768.4,500h2.4v3h-2.4zM763.4,504.6h2.4v3.4h-2.4zM768.4,504.6h2.4v3.4h-2.4z"/></g>
<g stroke="#1a1a1a" stroke-width="1" fill="none">
<path d="M883.8,504.5 H889 M886.4,502 V507 M890,504.5 H894.2"/>
<path d="M902.6,503 H909 M905.8,500.2 V505.8 M902.6,507.8 H909"/>
<path d="M920.8,502.4 H926.6 M923.7,499.8 V505"/><path d="M921,506.6 H926.4" stroke-width="2.6"/>
<path d="M937.6,503 H944.2 M937.6,506 H944.2"/>
<path d="M958.4,504.5 C957.4,502.6 954.8,502.6 954.8,504.5 C954.8,506.4 957.4,506.4 958.4,504.5 C959.4,502.6 962,502.6 962,504.5 C962,506.4 959.4,506.4 958.4,504.5 Z" stroke-width="1.1"/>
<path d="M975.6,501.6 C974.8,500.2 972.6,500.2 972.6,501.6 C972.6,503 974.8,503 975.6,501.6 C976.4,500.2 978.6,500.2 978.6,501.6 C978.6,503 976.4,503 975.6,501.6 Z M972.4,505.2 H979 M972.4,507.6 H979"/>
<path d="M989.6,500.4 H996 M989.6,502.4 H996 M989.8,505.8 H995.8 M992.8,503.4 V508.6" stroke-width="1.1"/>
<path d="M1006.6,500.8 H1013.2 M1007,505.4 H1012.8 M1009.9,502.4 V508.4"/>
<path d="M1022.6,504.5 H1026.8 M1027.8,504.5 H1032.6 M1030.2,502 V507"/>
<path d="M1041.2,502.6 H1047.6 M1041.6,506.2 H1048" stroke-width="1.3"/>
</g>
<path d="M1046.4,500.6 L1048.8,502.6 L1046.4,504.6 Z M1042.8,504.2 L1040.4,506.2 L1042.8,508.2 Z" fill="#1a1a1a"/>
<!-- eraser -->
<g transform="rotate(-32 1062 504.4)"><rect x="1056.6" y="502" width="5.6" height="4.8" rx="1" fill="#4a78c8"/><rect x="1062.2" y="502" width="5" height="4.8" rx="1" fill="#d85a5a"/><rect x="1061.2" y="502" width="1.6" height="4.8" fill="#e8e8f0"/></g>
<path id="star" d="M1079.8,499.8 L1081.2,503 L1084.6,503.3 L1082,505.5 L1082.8,508.8 L1079.8,507 L1076.8,508.8 L1077.6,505.5 L1075,503.3 L1078.4,503 Z" fill="#f4f4f4" stroke="#bdbdbd" stroke-width="0.7"/>
<use href="#star" x="17.4"/><path d="M1099.4,506.6 h3 m-1.5,-1.5 v3" stroke="#777" stroke-width="0.7"/>
<path d="M1110,500.2 L1118.6,507.4 M1118.8,500.6 L1110.6,508" stroke="#4a4a4a" stroke-width="1.5"/><path d="M1109.6,500 l3,0.6 l-1.6,1.8z" fill="#4a4a4a"/>
<rect x="1130.2" y="499.8" width="2.8" height="5.6" rx="1.4" fill="#9a9a9a" stroke="#7a7a7a" stroke-width="0.4"/><path d="M1129.2,504 C1129.2,507 1134,507 1134,504 M1131.6,506.4 V508.4 M1129.8,508.4 H1133.4" fill="none" stroke="#8a8a8a" stroke-width="0.7"/>
</svg>

<span class="t" id="t67" style="font-size:12.4px;color:#222;top:497.16px;line-height:14.88px;left:780.75px;">!!</span>
<span class="t" id="t68" style="font-size:12.4px;color:#222;top:497.16px;line-height:14.88px;left:798.97px;">!</span>
<span class="t" id="t69" style="font-size:12.4px;color:#222;top:497.16px;line-height:14.88px;left:813.03px;">!?</span>
<span class="t" id="t70" style="font-size:12.4px;color:#222;top:497.16px;line-height:14.88px;left:830.83px;">?!</span>
<span class="t" id="t71" style="font-size:12.4px;color:#222;top:497.16px;line-height:14.88px;left:849.75px;">?</span>
<span class="t" id="t72" style="font-size:12.4px;color:#222;top:497.16px;line-height:14.88px;left:864.40px;">??</span>
<div style="position:absolute;left:666px;top:515.5px;width:534px;height:12.6px;background:linear-gradient(#c5d0dc,#a9b7c6)"></div>
<span class="t" id="t73" style="font-size:7.8px;color:#1d2734;top:517.92px;line-height:9.36px;left:668.70px;letter-spacing:-0.239px;">Audience</span>
<div style="position:absolute;left:666px;top:528.1px;width:534px;height:103px;background:#fff"></div>
<div style="position:absolute;left:666px;top:528.1px;width:534px;height:14.6px;background:#fff;border-bottom:0.8px solid #e4e4e4"></div>
<span class="t" id="t74" style="font-size:7.8px;color:#333;top:532.12px;line-height:9.36px;left:669.50px;">Name</span>
<span class="t" id="t75" style="font-size:7.8px;color:#333;top:532.12px;line-height:9.36px;left:734.30px;">Blitz</span>
<span class="t" id="t76" style="font-size:7.8px;color:#333;top:532.12px;line-height:9.36px;left:760.10px;">Bul...</span>
<span class="t" id="t77" style="font-size:7.8px;color:#333;top:532.12px;line-height:9.36px;left:786.00px;">Title</span>
<span class="t" id="t78" style="font-size:7.8px;color:#333;top:532.12px;line-height:9.36px;left:807.80px;">Status</span>
<span class="t" id="t79" style="font-size:7.8px;color:#333;top:532.12px;line-height:9.36px;left:859.80px;">Nat...</span>
<span class="t" id="t80" style="font-size:7.8px;color:#333;top:532.12px;line-height:9.36px;left:885.70px;">Rank</span>
<span class="t" id="t81" style="font-size:7.8px;color:#333;top:532.12px;line-height:9.36px;left:918.30px;">Distance</span>
<span class="t" id="t82" style="font-size:7.8px;color:#333;top:532.12px;line-height:9.36px;left:962.60px;">Social</span>
<span class="t" id="t83" style="font-size:7.8px;color:#333;top:532.12px;line-height:9.36px;left:1001.60px;">Slow</span>
<span class="t" id="t84" style="font-size:7.8px;color:#333;top:532.12px;line-height:9.36px;left:1026.80px;">Internet</span>
<span class="t" id="t85" style="font-size:7.8px;color:#333;top:532.12px;line-height:9.36px;left:1065.70px;">Classic Blitz</span>
<span class="t" id="t86" style="font-size:7.8px;color:#333;top:532.12px;line-height:9.36px;left:1123.50px;">Classic Bullet</span>
<span class="t" id="t87" style="font-size:7.8px;color:#333;top:532.12px;line-height:9.36px;left:1194.40px;">En</span>
<div style="position:absolute;left:729.8px;top:529px;width:0.8px;height:13px;background:#e2e2e2"></div>
<div style="position:absolute;left:755.6px;top:529px;width:0.8px;height:13px;background:#e2e2e2"></div>
<div style="position:absolute;left:781.5px;top:529px;width:0.8px;height:13px;background:#e2e2e2"></div>
<div style="position:absolute;left:804px;top:529px;width:0.8px;height:13px;background:#e2e2e2"></div>
<div style="position:absolute;left:855.3px;top:529px;width:0.8px;height:13px;background:#e2e2e2"></div>
<div style="position:absolute;left:881.6px;top:529px;width:0.8px;height:13px;background:#e2e2e2"></div>
<div style="position:absolute;left:913.8px;top:529px;width:0.8px;height:13px;background:#e2e2e2"></div>
<div style="position:absolute;left:958.1px;top:529px;width:0.8px;height:13px;background:#e2e2e2"></div>
<div style="position:absolute;left:997px;top:529px;width:0.8px;height:13px;background:#e2e2e2"></div>
<div style="position:absolute;left:1022.3px;top:529px;width:0.8px;height:13px;background:#e2e2e2"></div>
<div style="position:absolute;left:1061.2px;top:529px;width:0.8px;height:13px;background:#e2e2e2"></div>
<div style="position:absolute;left:1119px;top:529px;width:0.8px;height:13px;background:#e2e2e2"></div>
<div style="position:absolute;left:1189.9px;top:529px;width:0.8px;height:13px;background:#e2e2e2"></div>
<div style="position:absolute;left:666px;top:554.6px;width:534px;height:10.6px;background:#0078d7"></div>
<div style="position:absolute;left:666px;top:554.2px;width:534px;height:0.8px;background:#e9a46c"></div>
<span class="t" id="t88" style="font-size:7.8px;color:#111;top:545.12px;line-height:9.36px;left:681.40px;">Broadcasts</span>
<span class="t" id="t89" style="font-size:7.8px;color:#111;top:545.12px;line-height:9.36px;left:734.30px;">1620</span>
<span class="t" id="t90" style="font-size:7.8px;color:#111;top:545.12px;line-height:9.36px;left:760.10px;">1620</span>
<span class="t" id="t91" style="font-size:7.8px;color:#111;top:545.12px;line-height:9.36px;left:807.80px;">Chairman</span>
<span class="t" id="t92" style="font-size:7.8px;color:#111;top:545.12px;line-height:9.36px;left:885.20px;letter-spacing:-0.627px;">ChessBa:</span>
<span class="t" id="t93" style="font-size:7.8px;color:#111;top:545.12px;line-height:9.36px;left:922.00px;">0 km</span>
<span class="t" id="t94" style="font-size:7.8px;color:#111;top:545.12px;line-height:9.36px;left:1000.90px;">1620</span>
<span class="t" id="t95" style="font-size:7.8px;color:#111;top:545.12px;line-height:9.36px;left:1065.00px;">1620</span>
<span class="t" id="t96" style="font-size:7.8px;color:#111;top:545.12px;line-height:9.36px;left:1123.00px;">1620</span>
<span class="t" id="t97" style="font-size:7.8px;color:#fff;top:556.22px;line-height:9.36px;left:681.40px;">Robot 1</span>
<span class="t" id="t98" style="font-size:7.8px;color:#fff;top:556.22px;line-height:9.36px;left:734.30px;">1620</span>
<span class="t" id="t99" style="font-size:7.8px;color:#fff;top:556.22px;line-height:9.36px;left:760.10px;">1620</span>
<span class="t" id="t100" style="font-size:7.8px;color:#fff;top:556.22px;line-height:9.36px;left:807.80px;">Idle</span>
<span class="t" id="t101" style="font-size:7.8px;color:#0a2a55;top:556.22px;line-height:9.36px;left:885.20px;">Sysop++</span>
<span class="t" id="t102" style="font-size:7.8px;color:#fff;top:556.22px;line-height:9.36px;left:922.00px;">0 km</span>
<span class="t" id="t103" style="font-size:7.8px;color:#fff;top:556.22px;line-height:9.36px;left:961.50px;">Is Friend</span>
<span class="t" id="t104" style="font-size:7.8px;color:#fff;top:556.22px;line-height:9.36px;left:1000.90px;">1620</span>
<span class="t" id="t105" style="font-size:7.8px;color:#fff;top:556.22px;line-height:9.36px;left:1065.00px;">1620</span>
<span class="t" id="t106" style="font-size:7.8px;color:#fff;top:556.22px;line-height:9.36px;left:1123.00px;">1620</span>
<svg style="position:absolute;left:863.6px;top:545.2px" width="9" height="7.2" viewBox="0 0 9 7.2"><rect width="9" height="2.4" fill="#1a1a1a"/><rect y="2.4" width="9" height="2.4" fill="#d81e1e"/><rect y="4.8" width="9" height="2.4" fill="#f4c400"/></svg>
<svg style="position:absolute;left:863.6px;top:556.4px" width="9" height="7.2" viewBox="0 0 9 7.2"><rect width="9" height="2.4" fill="#1a1a1a"/><rect y="2.4" width="9" height="2.4" fill="#d81e1e"/><rect y="4.8" width="9" height="2.4" fill="#f4c400"/></svg>
<div style="position:absolute;left:1028.3px;top:546.6px;width:9.6px;height:4.6px;background:#10b010;border:0.6px solid #0a6a0a;border-radius:1px"></div>
<span class="t" id="t107" style="font-size:5.2px;color:#555;top:546.08px;line-height:6.24px;left:1039.60px;">ok,sn</span>
<div style="position:absolute;left:1028.3px;top:557.8px;width:9.6px;height:4.6px;background:#10b010;border:0.6px solid #0a6a0a;border-radius:1px"></div>
<span class="t" id="t108" style="font-size:5.2px;color:#0a2a55;top:557.28px;line-height:6.24px;left:1039.60px;">ok,sn</span>
<svg style="position:absolute;left:668.4px;top:543.8px" width="10.4" height="10" viewBox="0 0 10.4 10"><rect x="1.6" y="1.6" width="8.8" height="8.4" fill="#c81e1e"/><rect x="0" y="0" width="4.4" height="4.2" fill="#fff"/><path d="M0,0h1.5v1.4h-1.5zM2.9,0h1.5v1.4h-1.5zM1.5,1.4h1.4v1.4h-1.4zM0,2.8h1.5v1.4h-1.5zM2.9,2.8h1.5v1.4h-1.5z" fill="#111"/></svg>
<svg style="position:absolute;left:668.4px;top:555px" width="10.4" height="10" viewBox="0 0 10.4 10"><path d="M1,1 L9,9 M9.2,1.2 L1.2,9" stroke="#9ab" stroke-width="1.5"/><path d="M0.8,0.8 l2.2,0.6 l-1.4,1.6z M9.4,0.8 l-2.4,0.8 l1.6,1.6z" fill="#cde"/></svg>
<div style="position:absolute;left:666px;top:627.2px;width:534px;height:3.8px;background:#f0f0f0"></div>
<div style="position:absolute;left:676.8px;top:627.6px;width:509px;height:3.4px;background:#cdcdcd"></div>
</body></html>
